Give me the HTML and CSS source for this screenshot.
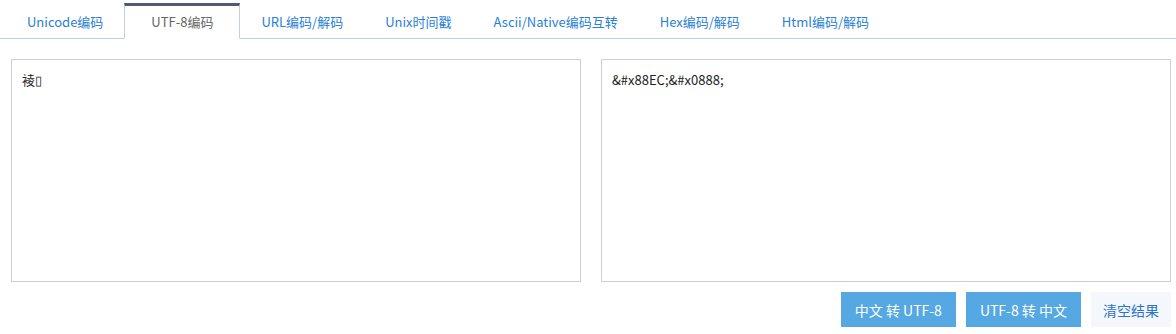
FILE: index.html
```html
<!DOCTYPE html>
<html lang="zh-CN">
<head>
    <meta charset="UTF-8">
    <meta name="viewport" content="width=device-width, initial-scale=1.0">
    <title>UTF-8编码转换</title>
    <link rel="stylesheet" href="styles.css">
</head>
<body>
    <ul class="tabs">
        <li class="tab">Unicode编码</li>
        <li class="tab active">UTF-8编码</li>
        <li class="tab">URL编码/解码</li>
        <li class="tab">Unix时间戳</li>
        <li class="tab">Ascii/Native编码互转</li>
        <li class="tab">Hex编码/解码</li>
        <li class="tab">Html编码/解码</li>
    </ul>

    <div class="panel">
        <div class="boxes">
            <textarea class="box" id="source">&#x88EC;&#x25AF;</textarea>
            <textarea class="box" id="result">&amp;#x88EC;&amp;#x0888;</textarea>
        </div>
        <div class="actions">
            <button class="button">中文 转 UTF-8</button>
            <button class="button">UTF-8 转 中文</button>
            <button class="button plain">清空结果</button>
        </div>
    </div>
</body>
</html>
```

FILE: styles.css
```css
body {
    margin: 0;
    background-color: #fff;
    font-family: "Noto Sans CJK SC", "Noto Sans", sans-serif;
    font-size: 14px;
    color: #333;
}
.tabs {
    display: flex;
    list-style: none;
    margin: 0;
    padding: 3px 0 0 6px;
    border-bottom: 1px solid #c4cee0;
}
.tab {
    padding: 0 20px;
    height: 32px;
    line-height: 32px;
    border-top: 3px solid transparent;
    border-left: 1px solid transparent;
    border-right: 1px solid transparent;
    margin-bottom: -1px;
    color: #2a7fd6;
    font-size: 13px;
    cursor: pointer;
}
.tab.active {
    padding: 0 26px;
    border-top-color: #4f5b73;
    border-left-color: #c4cee0;
    border-right-color: #c4cee0;
    border-bottom: 1px solid #fff;
    background-color: #fff;
    color: #666;
}
.panel {
    padding: 20px 5px 0 11px;
}
.boxes {
    display: flex;
    gap: 20px;
}
.box {
    flex: 1;
    height: 223px;
    box-sizing: border-box;
    margin: 0;
    padding: 10px 10px;
    border: 1px solid #c9cfdb;
    border-radius: 0;
    resize: none;
    outline: none;
    font-family: "Noto Sans CJK SC", "Noto Sans", sans-serif;
    font-size: 13px;
    line-height: 20px;
    color: #222;
}
.actions {
    display: flex;
    justify-content: flex-end;
    gap: 10px;
    margin-top: 10px;
}
.button {
    height: 35px;
    padding: 0 14px;
    border: none;
    background-color: #56a8e2;
    color: #fff;
    font-family: "Noto Sans CJK SC", "Noto Sans", sans-serif;
    font-size: 14px;
    cursor: pointer;
}
.button.plain {
    padding: 0 12px;
    background-color: #f4f8fc;
    color: #2a74cc;
}
```
